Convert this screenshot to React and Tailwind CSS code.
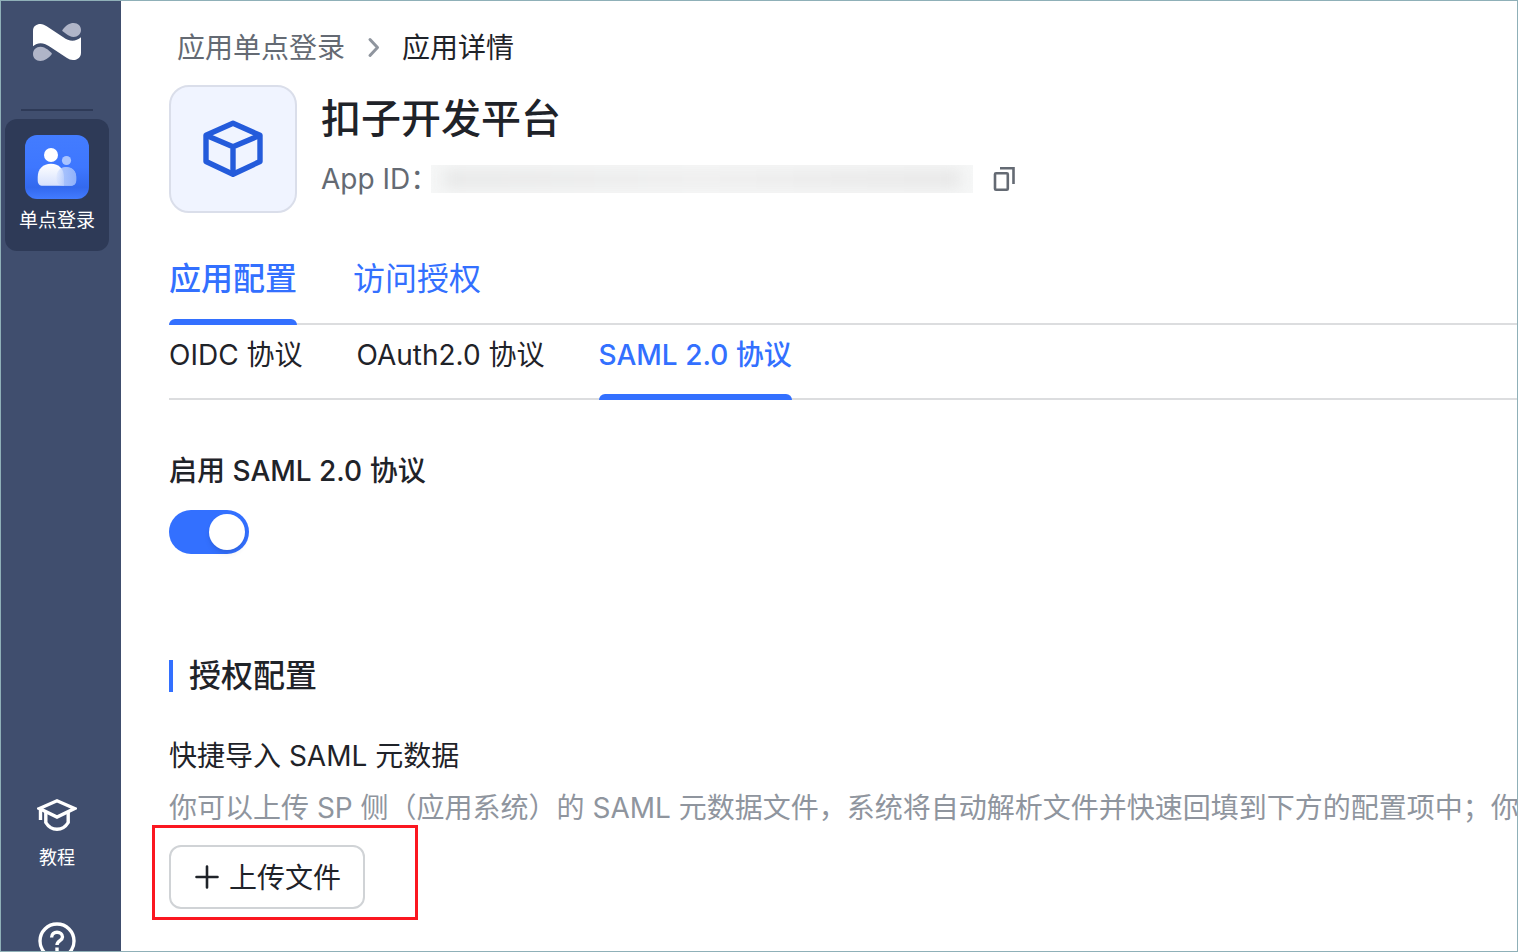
import { useState } from "react";

function Logo() {
  return (
    <svg viewBox="99 69 144 114" className="h-[38px] w-12 shrink-0" role="img" aria-label="Logo">
      <path
        fill="#ffffff"
        d="M99 139V93C99 78 110 72 121 72C129 72 134 75 140 79L190 112C207 125 227 126 243 112V158C243 173 231 180 219 180C212 180 207 178 201 174L151 141C133 128 114 125 99 139Z"
      />
      <path
        fill="#b0b5c8"
        d="M188 89C197 77 208 69 221 69C234 69 243 78 243 90C243 102 233 111 221 111C212 111 206 107 200 103L188 94C186 92 187 90 188 89Z"
      />
      <path
        fill="#b0b5c8"
        d="M155 163C146 175 134 183 121 183C108 183 99 174 99 162C99 149 109 140 121 140C130 140 136 144 142 148L154 158C156 160 156 162 155 163Z"
      />
    </svg>
  );
}

function PeopleIcon() {
  return (
    <svg viewBox="0 0 64 64" className="size-16">
      <defs>
        <linearGradient id="tile" x1="0" y1="0" x2="0" y2="1">
          <stop offset="0" stopColor="#437cff" />
          <stop offset="0.5" stopColor="#3e77ff" />
          <stop offset="0.82" stopColor="#3369ee" />
          <stop offset="1" stopColor="#427bff" />
        </linearGradient>
        <linearGradient id="body" x1="0" y1="0" x2="0" y2="1">
          <stop offset="0" stopColor="#ffffff" />
          <stop offset="1" stopColor="#d6e1fd" />
        </linearGradient>
        <linearGradient id="friend" x1="0" y1="0" x2="1" y2="0">
          <stop offset="0" stopColor="#c9d9fd" stopOpacity="0.3" />
          <stop offset="0.5" stopColor="#a3bffc" stopOpacity="0.9" />
          <stop offset="1" stopColor="#8fb0fb" />
        </linearGradient>
      </defs>
      <rect width="64" height="64" rx="12" fill="url(#tile)" />
      <circle cx="26" cy="20" r="7" fill="#ffffff" />
      <circle cx="41.5" cy="25.5" r="4.6" fill="#a9c4ff" />
      <path d="M31.5 42C31.500 36 35.500 32 41 32C47 32 51.200 36 51.200 42V45C51.200 49 49 50.800 45 50.800H39Z" fill="#8fb0fb" />
      <path d="M12.700 42C12.700 34 18 28.700 26 28.700C34 28.700 39 34 39 42V50.800H18C14 50.800 12.700 48.500 12.700 45Z" fill="url(#body)" />
      <path d="M31.500 42C31.500 36 35.500 32 41 32C47 32 51.200 36 51.200 42V45C51.200 49 49 50.800 45 50.800H39C34 50.800 31.500 48 31.500 44Z" fill="url(#friend)" />
    </svg>
  );
}

function CapIcon() {
  return (
    <svg viewBox="0 0 40 34" className="h-[34px] w-10" fill="none" stroke="#ffffff" strokeWidth="3.4">
      <path d="M2.500 10.500L20 2.800L37.500 10.500L20 19Z" />
      <path d="M3.500 10.500V22" />
      <path d="M8.800 14V24.500C11.500 29 15.500 31.300 20 31.300S28.500 29 31.200 24.500V14" />
    </svg>
  );
}

function HelpIcon() {
  return (
    <svg viewBox="0 0 38 38" className="size-[38px]" fill="none" stroke="#ffffff" strokeWidth="3.4">
      <circle cx="19" cy="19" r="17" />
      <path d="M13.600 15.500C13.600 12 16 10.300 19 10.300S24.500 12.200 24.500 15C24.500 18.600 19 18.600 19 23" />
      <path d="M19 25.500V29" />
    </svg>
  );
}

function CubeIcon() {
  return (
    <svg viewBox="0 0 64 64" className="size-16" fill="none" stroke="#245bdb" strokeWidth="5.4" strokeLinejoin="round">
      <path d="M32 6.200L59 18.300V44.500L32 57.300L5 44.500V18.300Z" />
      <path d="M5 18.300L32 29.800L59 18.300M32 29.800V57.300" />
    </svg>
  );
}

function CopyIcon() {
  return (
    <svg viewBox="0 0 24 26" className="h-[26px] w-6" fill="none" stroke="#646a73" strokeWidth="2.6">
      <rect x="2" y="7.200" width="12.800" height="16.600" rx="1" />
      <path d="M7 2.300H20.500V18" />
    </svg>
  );
}

const tabs = ["应用配置", "访问授权"];
const protocols = ["OIDC 协议", "OAuth2.0 协议", "SAML 2.0 协议"];

export default function App() {
  const [tab, setTab] = useState(0);
  const [protocol, setProtocol] = useState(2);
  const [enabled, setEnabled] = useState(true);

  return (
    <div className="flex h-screen overflow-hidden border border-[#8fb0b8] bg-white font-['Inter','Noto_Sans_CJK_SC',sans-serif] text-[28px] leading-10 text-[#1f2329]">
      <aside className="flex w-[120px] shrink-0 flex-col items-center overflow-hidden bg-[#404e6e] pt-[22px] pr-2 text-white">
        <Logo />
        <div className="mt-12 h-0.5 w-[72px] shrink-0 bg-[#2e3a57]" />
        <a href="#sso" className="mt-2 flex h-[132px] w-[104px] shrink-0 flex-col items-center rounded-xl bg-[#2e3a57] pt-4">
          <PeopleIcon />
          <span className="mt-2 text-[19px] leading-7">单点登录</span>
        </a>
        <a href="#tutorial" className="mt-[547px] flex shrink-0 flex-col items-center">
          <CapIcon />
          <span className="mt-3 text-[18px] leading-7">教程</span>
        </a>
        <a href="#help" aria-label="帮助" className="mt-[50px] shrink-0">
          <HelpIcon />
        </a>
      </aside>

      <main className="min-w-0 flex-1 overflow-hidden pt-6 pl-12">
        <nav className="flex h-11 items-center pt-0.5 pl-2">
          <a href="#apps" className="text-[#646a73]">应用单点登录</a>
          <svg viewBox="0 0 16 24" className="mr-5 ml-[21px] h-6 w-4" fill="none" stroke="#8f959e" strokeWidth="3" strokeLinecap="round" strokeLinejoin="round">
            <path d="M4 3.500L11.500 11.500L4 19.500" />
          </svg>
          <span>应用详情</span>
        </nav>

        <header className="mt-4 flex h-32">
          <div className="flex w-32 items-center justify-center rounded-[20px] border-2 border-[#dadeea] bg-[#f0f4ff]">
            <CubeIcon />
          </div>
          <div className="ml-6 pt-[5px]">
            <h1 className="text-[40px] leading-[58px] font-medium">扣子开发平台</h1>
            <div className="mt-[13px] flex h-9 items-center text-[#646a73]">
              <span className="w-[110px] whitespace-nowrap">App ID：</span>
              <div className="h-7 w-[542px] overflow-hidden bg-[#f6f7f7]">
                <div className="mx-3 mt-1 h-5 bg-linear-to-r from-[#e8e9e9] via-[#efefef] to-[#e8e8e8] blur-[7px]" />
              </div>
              <button type="button" aria-label="复制 App ID" className="ml-5">
                <CopyIcon />
              </button>
            </div>
          </div>
        </header>

        <div role="tablist" className="mt-8 flex h-20 gap-14 border-b-2 border-[#dcdddf] text-[32px] text-[#3370ff]">
          {tabs.map((label, i) => (
            <button
              key={label}
              type="button"
              role="tab"
              aria-selected={tab === i}
              onClick={() => setTab(i)}
              className={tab === i ? "relative pb-2.5 font-medium" : "relative pb-2.5"}
            >
              {label}
              {tab === i && <span className="absolute inset-x-0 -bottom-0.5 h-1.5 rounded-t-md bg-[#3370ff]" />}
            </button>
          ))}
        </div>

        <div role="tablist" className="flex h-[75px] gap-[54px] border-b-2 border-[#dcdddf]">
          {protocols.map((label, i) => (
            <button
              key={label}
              type="button"
              role="tab"
              aria-selected={protocol === i}
              onClick={() => setProtocol(i)}
              className={protocol === i ? "relative pb-[13px] font-medium text-[#3370ff]" : "relative pb-[13px]"}
            >
              {label}
              {protocol === i && <span className="absolute inset-x-0 -bottom-0.5 h-1.5 rounded-t-md bg-[#3370ff]" />}
            </button>
          ))}
        </div>

        <label htmlFor="saml" className="mt-[51px] block font-medium">启用 SAML 2.0 协议</label>
        <input
          id="saml"
          type="checkbox"
          role="switch"
          checked={enabled}
          onChange={(e) => setEnabled(e.target.checked)}
          className="mt-[19px] flex h-11 w-20 appearance-none items-center rounded-full bg-[#bbbfc4] px-1 before:size-9 before:rounded-full before:bg-white before:shadow-md checked:justify-end checked:bg-[#3370ff]"
        />

        <h2 className="mt-[102px] flex items-center gap-4 text-[32px] font-medium">
          <span className="h-8 w-1 bg-[#3370ff]" />
          授权配置
        </h2>
        <h3 className="mt-10">快捷导入 SAML 元数据</h3>
        <p className="mt-3 whitespace-nowrap text-[#8f959e]">
          你可以上传 SP 侧（应用系统）的 SAML 元数据文件，系统将自动解析文件并快速回填到下方的配置项中；你也
        </p>

        <div className="relative mt-[17px] w-fit">
          <button type="button" className="flex h-16 items-center gap-2.5 rounded-xl border-2 border-[#d0d3d6] px-[22px]">
            <svg viewBox="0 0 26 26" className="size-[26px]" fill="none" stroke="#1f2329" strokeWidth="2.6" strokeLinecap="round">
              <path d="M14 2.500V23.500M3.500 13H24.500" />
            </svg>
            <span className="pt-0.5">上传文件</span>
          </button>
          <span className="pointer-events-none absolute -top-5 -left-[17px] h-[95px] w-[266px] border-3 border-[#fb1720]" />
        </div>
      </main>
    </div>
  );
}
